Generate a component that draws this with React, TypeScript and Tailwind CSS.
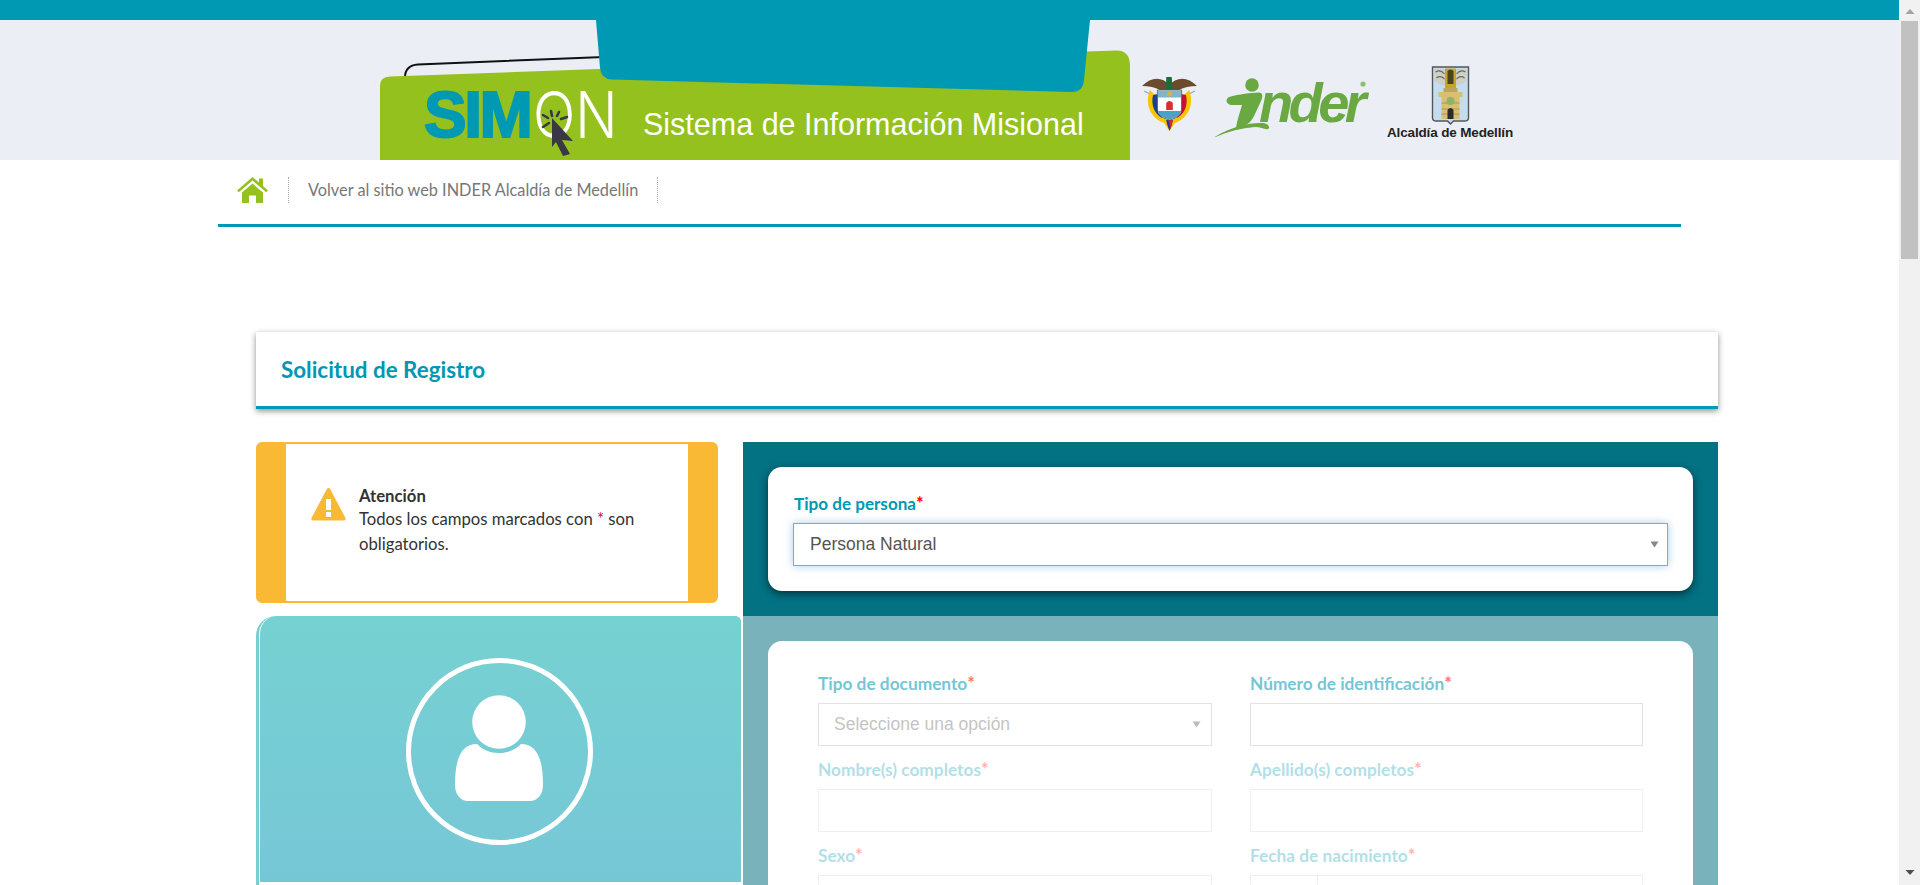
import { ReactNode } from "react";

const SANS = "font-['Source_Sans_Pro','Lato','Noto_Sans',sans-serif]";
const ARIAL = "font-['Liberation_Sans',Arial,sans-serif]";

const Star = () => <span className="text-[18px] font-bold leading-none text-[#ff0000]">*</span>;

const Caret = () => (
  <svg width="9" height="7" viewBox="0 0 9 7" className="shrink-0">
    <path d="M0.5 0.5h8L4.5 6.5z" fill="#888888" />
  </svg>
);

const HeaderArt = () => (
  <svg viewBox="0 0 1899 140" width="1899" height="140" className="block">
    {/* pestaña negra */}
    <path d="M405 57.5 C405 49 410 45 418 44.5 L604 37" fill="none" stroke="#111" strokeWidth="2" />
    {/* carpeta verde */}
    <path d="M380 160 V65 Q380 57 390 56.5 L1116 30.5 Q1130 30 1130 46 V160 Z" fill="#95c11e" />
    {/* pestaña azul */}
    <path d="M596 0 L600 48 Q601 59 612 59.5 L1072 72 Q1083 72 1084 60 L1090 0 Z" fill="#0099b3" />
  </svg>
);

const CursorArt = () => (
  <svg width="40" height="48" viewBox="0 0 40 48">
    <g stroke="#3a3845" strokeWidth="2.6" strokeLinecap="round">
      <path d="M11 3 L12 8" />
      <path d="M19 4 L17 8" />
      <path d="M27 9 L21 11" />
      <path d="M3 7 L8 10" />
      <path d="M3 19 L9 15" />
    </g>
    <path d="M12 10 L33 33 L22 32 L30 46 L23 48 L16 34 L12 39 Z" fill="#3a3845" />
  </svg>
);

const ColombiaCrest = () => (
  <svg width="55" height="60" viewBox="0 0 50 60" preserveAspectRatio="none">
    <path d="M2 18 L9 22 M48 18 L41 22" stroke="#9ca3af" strokeWidth="1" />
    <path d="M25 12 C18 3 8 4 0 13 C6 13 12 14 18 18 L25 18 L32 18 C38 14 44 13 50 13 C42 4 32 3 25 12Z" fill="#6b4a2e" />
    <path d="M22 4 L27 4 L28 18 L22 18Z" fill="#1f6b3a" />
    <path d="M7 17 C3 30 6 44 20 50 L25 58 L30 50 C44 44 47 30 43 17 L38 22 C40 32 37 40 25 44 C13 40 10 32 12 22Z" fill="#f7c600" />
    <path d="M10 22 C8 32 11 40 18 45 L19 20Z" fill="#1b3f94" />
    <path d="M40 22 C42 32 39 40 32 45 L31 20Z" fill="#c8102e" />
    <path d="M14 17 H36 V36 Q36 44 25 47 Q14 44 14 36Z" fill="#fff" stroke="#4b5563" strokeWidth="0.8" />
    <rect x="14.5" y="17.5" width="21" height="7" fill="#7fb6c9" />
    <circle cx="25" cy="21" r="2.5" fill="#d9b23a" />
    <path d="M22 30 Q25 26 28 30 V37 H22Z" fill="#d62f2f" />
    <path d="M14.5 38 H35.5 Q35 44 25 46.5 Q15 44 14.5 38Z" fill="#4aa3c7" />
    <path d="M22 47 H28 L27 52 L25 58 L23 52Z" fill="#1b3f94" />
    <path d="M24 47 H28 L26 56Z" fill="#d9232e" />
  </svg>
);

const InderLogo = () => (
  <div className="relative h-[60px] w-[152px]">
    <svg width="152" height="60" viewBox="0 0 152 60" className="absolute left-0 top-0">
      <circle cx="37" cy="7" r="6.8" fill="#6aa842" />
      <path d="M14 19 C24 16 36 15 44 14.5 C48 14.5 48 19 46 23 L40 36 C38 41 34 46 29 48 L21 50 C22 42 25 34 27 27 L16 27 C11 26 10 21 14 19Z" fill="#6aa842" />
      <path d="M-2 60 C14 50 30 45 46 45 C53 45 56 49 53 51 C50 52 46 49 40 49 C26 50 12 54 -2 60Z" fill="#6aa842" />
      <circle cx="148" cy="6" r="2.6" fill="#8fbf6a" />
    </svg>
    <span className="absolute left-[44px] top-[-8px] font-['Liberation_Sans',Arial,sans-serif] text-[56px] font-bold italic leading-[66px] tracking-[-4.6px] text-[#6aa842]">
      nder
    </span>
  </div>
);

const AlcaldiaLogo = () => (
  <div className="flex w-[126px] flex-col items-center">
    <svg width="39" height="60" viewBox="0 0 38 60">
      <path d="M1 1 H37 V52 Q37 55 33 55 H22 L19 58 L16 55 H5 Q1 55 1 52Z" fill="#c4dcf0" stroke="#555" strokeWidth="1.4" />
      <path d="M3 3 H35 V15 Q27 21 19 20 Q11 21 3 15Z" fill="#cfcfc6" />
      <path d="M4 6 Q9 3 13 8 M34 6 Q29 3 25 8 M5 12 Q9 9 13 13 M33 12 Q29 9 25 13" stroke="#6b6b60" strokeWidth="1.2" fill="none" />
      <rect x="13.5" y="2.5" width="11" height="20" fill="#c4a532" />
      <path d="M16 5 Q19 2 22 5 V18 H16Z" fill="#4a4320" />
      <path d="M7 26 H31 V31 H28 V53 H10 V31 H7Z" fill="#d8bf72" />
      <path d="M12 22 H26 V26 H12Z" fill="#bfa55c" />
      <path d="M10 37 H28 M10 43 H28 M10 48 H28" stroke="#a48d4e" strokeWidth="0.8" />
      <circle cx="19" cy="35" r="4" fill="#8fb26a" />
      <path d="M16 53 V44 Q19 40 22 44 V53Z" fill="#2b2b2b" />
    </svg>
    <span className={`${ARIAL} whitespace-nowrap text-[13.5px] font-bold leading-[14px] tracking-[-0.15px] text-[#222]`}>
      Alcaldía de Medellín
    </span>
  </div>
);

const Header = () => (
  <div className="relative h-[160px] shrink-0 overflow-hidden bg-[#ebeff5]">
    <div className="h-5 bg-[#0099b3]" />
    <HeaderArt />
    {/* logo SIMON */}
    <span className={`${ARIAL} absolute left-[424px] top-[79px] text-[64px] font-bold leading-[72px] tracking-[-2.5px] text-[#0099b3] [-webkit-text-stroke:2px_#0099b3]`}>
      SIM
    </span>
    <span className="absolute left-[533px] top-[79px] origin-left scale-x-[0.87] font-['Inter',sans-serif] text-[64px] font-light leading-[72px] text-white">
      ON
    </span>
    <div className="absolute left-[540px] top-[108px]">
      <CursorArt />
    </div>
    <span className={`${ARIAL} absolute left-[643px] top-[107px] whitespace-nowrap text-[30.5px] leading-[34px] text-white`}>
      Sistema de Información Misional
    </span>
    <div className="absolute left-[1142px] top-[73px]">
      <ColombiaCrest />
    </div>
    <div className="absolute left-[1215px] top-[78px]">
      <InderLogo />
    </div>
    <div className="absolute left-[1387px] top-[66px]">
      <AlcaldiaLogo />
    </div>
  </div>
);

const HomeIcon = () => (
  <svg width="31" height="26" viewBox="0 0 31 26">
    <path
      fill="#95c11e"
      d="M15.5 0 L22 5.6 V1.5 H26 V9 L31 13.5 L29.2 15.2 L15.5 3.6 L1.8 15.2 L0 13.5Z M5 15.6 L15.5 6.6 L26 15.6 V26 H19 V18.5 H12 V26 H5Z"
    />
  </svg>
);

const Nav = () => (
  <nav className="ml-[218px] flex h-[67px] w-[1463px] shrink-0 items-center border-b-[3px] border-[#0099b3] pb-[4px]">
    <div className="flex w-[70px] pl-[19px]">
      <HomeIcon />
    </div>
    <div className="h-[26px] border-l border-dotted border-[#aaa]" />
    <a className={`${SANS} px-[19px] text-[16.3px] text-[#777]`}>Volver al sitio web INDER Alcaldía de Medellín</a>
    <div className="h-[26px] border-l border-dotted border-[#aaa]" />
  </nav>
);

const Field = ({
  label,
  select,
  placeholder,
  fade,
  addon,
}: {
  label: string;
  select?: boolean;
  placeholder?: string;
  fade: string;
  addon?: boolean;
}) => (
  <div className={fade}>
    <label className={`${SANS} block h-[30px] text-[17.3px] font-bold leading-[22px] text-[#0099b3]`}>
      {label}
      <Star />
    </label>
    <div className={`${ARIAL} flex h-[43px] items-center border border-[#cccccc] bg-white pl-[15px] pr-[10px] text-[17.5px] text-[#949494]`}>
      {addon && <div className="-ml-[15px] h-full w-[67px] border-r border-[#cccccc]" />}
      <span className="flex-1">{placeholder}</span>
      {select && <Caret />}
    </div>
  </div>
);

const FormPanel = () => (
  <div className="flex min-w-0 flex-1 flex-col">
    <div className="bg-[#037283] px-[25px] pb-[25px] pt-[25px]">
      <div className="rounded-[14px] bg-white px-[25px] pb-[25px] pt-[25px] shadow-[0_3px_8px_rgba(0,0,0,0.55)]">
        <label className={`${SANS} ml-[1px] block h-[31px] text-[17.1px] font-bold leading-[24px] text-[#0099b3]`}>
          Tipo de persona
          <Star />
        </label>
        <div className={`${ARIAL} flex h-[43px] items-center border border-[#66afe9] pl-[16px] pr-[8px] text-[17.5px] text-[#555] shadow-[0_0_8px_rgba(102,175,233,0.6)]`}>
          <span className="flex-1">Persona Natural</span>
          <Caret />
        </div>
      </div>
    </div>
    <div className="flex-1 bg-[#7ab2bc] px-[25px] pt-[25px]">
      <div className="h-[400px] rounded-[14px] bg-white px-[50px] pt-[32px]">
        <div className="grid grid-cols-[394px_393px] gap-x-[38px] gap-y-[13px]">
          <Field label="Tipo de documento" select placeholder="Seleccione una opción" fade="opacity-55" />
          <Field label="Número de identificación" fade="opacity-55" />
          <Field label="Nombre(s) completos" fade="opacity-30" />
          <Field label="Apellido(s) completos" fade="opacity-30" />
          <Field label="Sexo" select fade="opacity-30" />
          <Field label="Fecha de nacimiento" addon fade="opacity-30" />
        </div>
      </div>
    </div>
  </div>
);

const Avatar = () => (
  <div className="mt-[13px] h-[300px] w-[485px] rounded-tl-[20px] rounded-tr-[6px] bg-[#76d0d2] pl-[3px]">
    <div className="flex h-[266px] items-center justify-center rounded-tl-[18px] rounded-tr-[6px] border-l border-white bg-gradient-to-b from-[#76d1d1] to-[#76c7d6] pt-[4px]">
      <div className="-ml-[3px] flex h-[187px] w-[187px] items-center justify-center rounded-full border-[5px] border-white pb-[6px]">
        <svg width="90" height="107" viewBox="0 0 90 107">
          <circle cx="45" cy="27" r="26.8" fill="#fff" />
          <path
            fill="#fff"
            d="M23 49 C29 55 36 58 45 58 C54 58 61 55 67 49 C82 49 89 62 89 90 C89 100 83 106 76 106 H14 C7 106 1 100 1 90 C1 62 8 49 23 49Z"
          />
        </svg>
      </div>
    </div>
    <div className="h-[40px] bg-white" />
  </div>
);

const Warning = () => (
  <svg width="35" height="34" viewBox="0 0 35 34" className="shrink-0">
    <path d="M17.5 1 Q18.6 1 19.4 2.4 L34.5 31 Q35.3 33.5 33 33.5 H2 Q-0.3 33.5 0.5 31 L15.6 2.4 Q16.4 1 17.5 1Z" fill="#f9b934" />
    <rect x="15" y="12" width="5" height="11" fill="#fff" />
    <rect x="15" y="25" width="5" height="5" fill="#fff" />
  </svg>
);

const Alert = () => (
  <div className="h-[161px] w-[462px] rounded-[6px] border-x-[30px] border-y-2 border-[#f9b934] bg-white">
    <div className={`${SANS} flex gap-[13px] pl-[25px] pt-[42px] text-[16.7px] text-[#333]`}>
      <div className="pt-[1px]">
        <Warning />
      </div>
      <div className="w-[290px]">
        <p className="font-bold leading-[21px]">Atención</p>
        <p className="leading-[25px]">
          Todos los campos marcados con <span className="text-[#e0004d]">*</span> son obligatorios.
        </p>
      </div>
    </div>
  </div>
);

const Scrollbar = () => (
  <div className="flex h-full w-[21px] shrink-0 flex-col items-center bg-[#f1f1f1]">
    <svg width="10" height="21" viewBox="0 0 10 21" className="shrink-0">
      <path d="M0.5 14 L5 9 L9.5 14Z" fill="#a3a3a3" />
    </svg>
    <div className="h-[238px] w-[17px] shrink-0 bg-[#c1c1c1]" />
    <div className="flex-1" />
    <svg width="10" height="21" viewBox="0 0 10 21" className="shrink-0">
      <path d="M0.5 6 L9.5 6 L5 11Z" fill="#505050" />
    </svg>
  </div>
);

const Shell = ({ children }: { children: ReactNode }) => (
  <div className="flex h-[885px] w-[1920px] overflow-hidden bg-white">
    <div className="h-full w-[1899px] shrink-0 overflow-hidden">{children}</div>
    <Scrollbar />
  </div>
);

export default function App() {
  return (
    <Shell>
      <Header />
      <Nav />
      <main className="ml-[256px] mt-[105px] w-[1462px]">
        <div className="flex h-[77px] items-center border-b-[3px] border-[#0099b3] bg-white pl-[25px] pt-[2px] shadow-[0_2px_6px_rgba(0,0,0,0.45)]">
          <h1 className={`${SANS} text-[22.4px] font-bold text-[#0097b2]`}>Solicitud de Registro</h1>
        </div>
        <div className="mt-[33px] flex">
          <div className="w-[487px] shrink-0">
            <Alert />
            <Avatar />
          </div>
          <FormPanel />
        </div>
      </main>
    </Shell>
  );
}
